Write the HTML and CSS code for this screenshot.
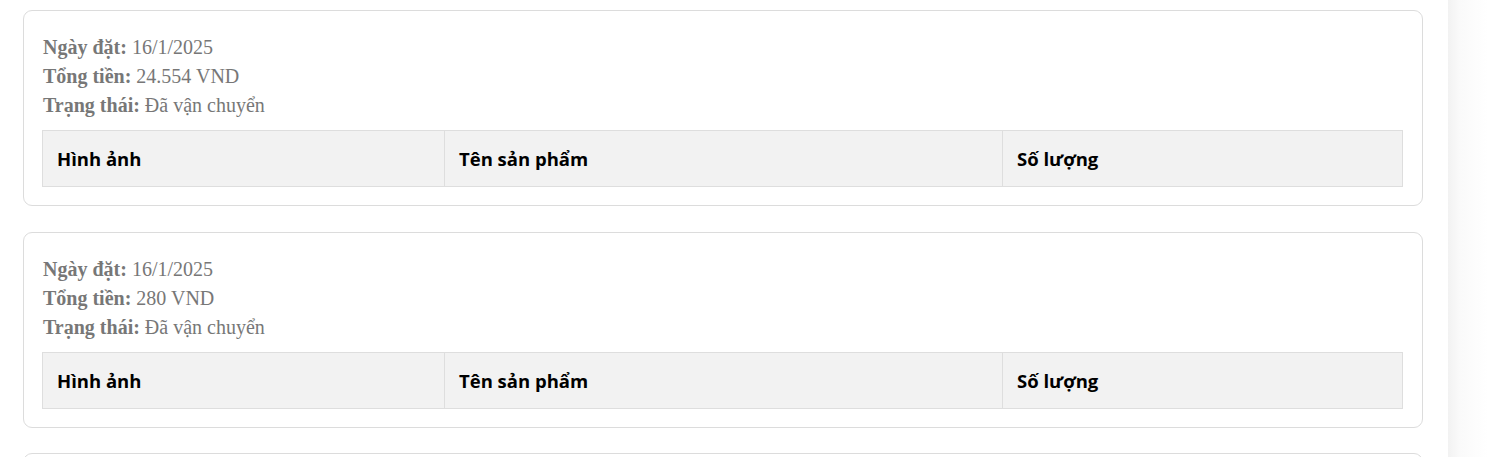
FILE: index.html
```html
<!DOCTYPE html>
<html lang="vi">
<head>
<meta charset="utf-8">
<title>Đơn hàng</title>
<link rel="stylesheet" href="styles.css">
</head>
<body>
<div class="page">
  <main class="orders">
    <section class="order">
      <div class="info">
        <p><b>Ngày đặt:</b> 16/1/2025</p>
        <p><b>Tổng tiền:</b> 24.554 VND</p>
        <p><b>Trạng thái:</b> Đã vận chuyển</p>
      </div>
      <table class="items">
        <thead><tr><th class="c1">Hình ảnh</th><th class="c2">Tên sản phẩm</th><th class="c3">Số lượng</th></tr></thead>
      </table>
    </section>
    <section class="order">
      <div class="info">
        <p><b>Ngày đặt:</b> 16/1/2025</p>
        <p><b>Tổng tiền:</b> 280 VND</p>
        <p><b>Trạng thái:</b> Đã vận chuyển</p>
      </div>
      <table class="items">
        <thead><tr><th class="c1">Hình ảnh</th><th class="c2">Tên sản phẩm</th><th class="c3">Số lượng</th></tr></thead>
      </table>
    </section>
    <section class="order order-empty"></section>
  </main>
  <aside class="side"></aside>
</div>
</body>
</html>
```
FILE: styles.css
```css
html, body { margin: 0; padding: 0; background: #fff; overflow: hidden; }
.page { display: flex; height: 457px; }
.orders { padding: 10px 0 0 23px; width: 1400px; flex: none; }
.order {
  border: 1px solid #dcdcdc;
  border-radius: 9px;
  padding: 22px 19px 18px 18px;
  margin-bottom: 25.5px;
  background: #fff;
}
.order-empty { height: 150px; }
.info { font-family: "Liberation Serif", "Times New Roman", serif; font-size: 20px; color: #777; padding-left: 1px; }
.info p { margin: 0; line-height: 29px; }
.info b { color: #777; }
.items { width: 100%; table-layout: fixed; border-collapse: collapse; margin-top: 10px; }
.items th {
  font-family: "Open Sans", "Noto Sans", sans-serif;
  font-weight: 700;
  font-size: 18.5px;
  color: #000;
  text-align: left;
  background: #f2f2f2;
  border: 1px solid #dedede;
  padding: 14px 14px;
  height: 27px;
}
.c1 { width: 373px; }
.c2 { width: 529px; }
.side {
  margin-left: 25px;
  flex: 1;
  background: linear-gradient(to right, #f2f2f2 0px, #fafafa 12px, #fff 40px);
}
```
